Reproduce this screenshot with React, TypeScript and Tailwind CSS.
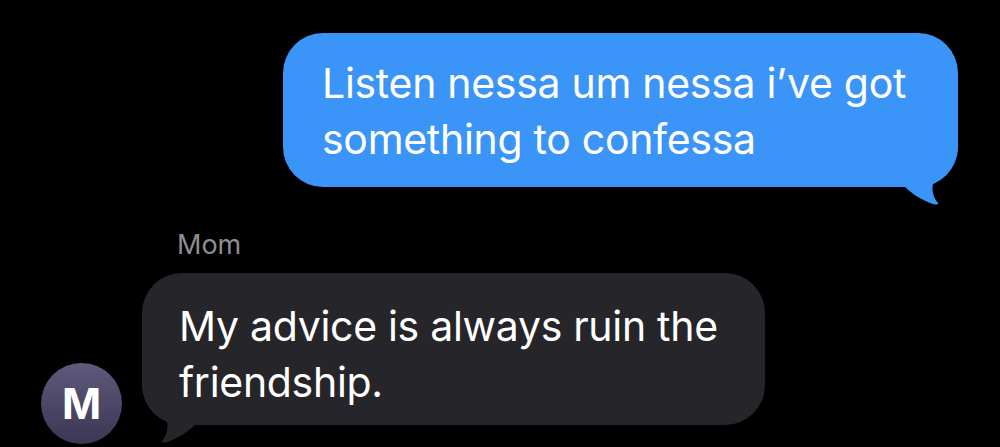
import React from "react"

const TAIL_PATH =
  "M0 0 L58 0 L58 5 C58 22 46 32 36 38 C31 43 31 55 38 63 C39 64.5 36 65 33 64 C22 60 12 54 5 47 L0 47 Z"

function Tail({ color, side }: { color: string; side: "left" | "right" }) {
  return (
    <svg
      width="60"
      height="67"
      viewBox="0 0 60 67"
      className={
        side === "right"
          ? "absolute right-[-2px] bottom-[-20px]"
          : "absolute left-[-2px] bottom-[-20px] -scale-x-100"
      }
    >
      <path d={TAIL_PATH} fill={color} />
    </svg>
  )
}

export default function App() {
  return (
    <div
      className="w-full h-[447px] bg-black overflow-hidden antialiased"
      style={{ fontFamily: "Inter, 'Liberation Sans', sans-serif" }}
    >
      {/* Sent message */}
      <div className="flex justify-end pr-[42px] pt-[33px]">
        <div className="relative w-[675px] rounded-[40px] bg-[#3b94f7] pl-[39px] pt-[22px] pb-[20px] text-white text-[41px] leading-[56px] tracking-[-0.3px]">
          <Tail color="#3b94f7" side="right" />
          <div className="relative">
            Listen nessa um nessa i’ve got
            <br />
            something to confessa
          </div>
        </div>
      </div>

      {/* Received message */}
      <div className="flex items-end gap-[20px] pl-[41px] mt-[42px]">
        <div className="w-[81px] h-[81px] shrink-0 rounded-full bg-gradient-to-b from-[#5f5a7c] to-[#3b3653] flex items-center justify-center text-white text-[42px] font-bold">
          M
        </div>
        <div className="flex flex-col pb-[19px]">
          <div className="ml-[35px] mb-[12px] text-[27px] leading-[32px] text-[#8e8e93]">Mom</div>
          <div className="relative w-[623px] rounded-[40px] bg-[#262529] pl-[37px] pt-[25px] pb-[15px] text-white text-[41px] leading-[56px] tracking-[-0.3px]">
            <Tail color="#262529" side="left" />
            <div className="relative">
              My advice is always ruin the
              <br />
              friendship.
            </div>
          </div>
        </div>
      </div>
    </div>
  )
}
